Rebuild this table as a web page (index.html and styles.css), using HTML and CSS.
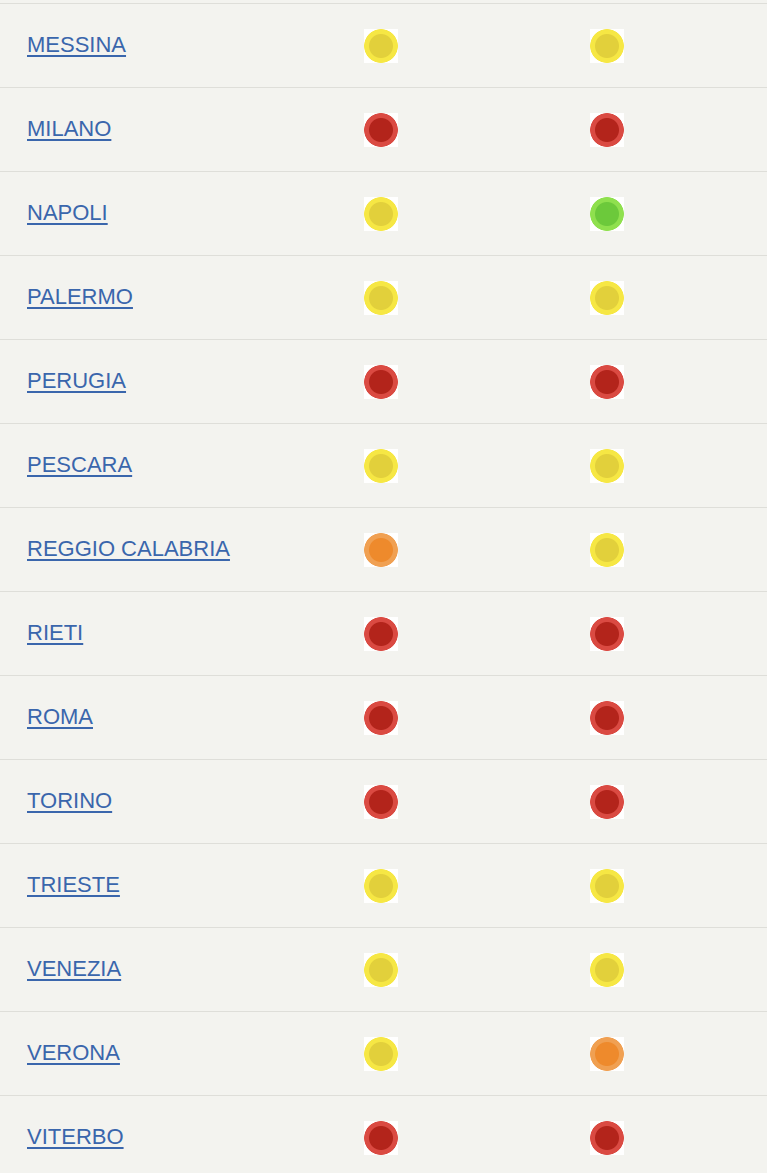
FILE: index.html
```html
<!DOCTYPE html>
<html lang="it">
<head>
<meta charset="utf-8">
<title>Città</title>
<link rel="stylesheet" href="styles.css">
</head>
<body>
<div class="table">
  <div class="row"><a class="city" href="#">MESSINA</a><span class="dot yellow"></span><span class="dot yellow"></span></div>
  <div class="row"><a class="city" href="#">MILANO</a><span class="dot red"></span><span class="dot red"></span></div>
  <div class="row"><a class="city" href="#">NAPOLI</a><span class="dot yellow"></span><span class="dot green"></span></div>
  <div class="row"><a class="city" href="#">PALERMO</a><span class="dot yellow"></span><span class="dot yellow"></span></div>
  <div class="row"><a class="city" href="#">PERUGIA</a><span class="dot red"></span><span class="dot red"></span></div>
  <div class="row"><a class="city" href="#">PESCARA</a><span class="dot yellow"></span><span class="dot yellow"></span></div>
  <div class="row"><a class="city" href="#">REGGIO CALABRIA</a><span class="dot orange"></span><span class="dot yellow"></span></div>
  <div class="row"><a class="city" href="#">RIETI</a><span class="dot red"></span><span class="dot red"></span></div>
  <div class="row"><a class="city" href="#">ROMA</a><span class="dot red"></span><span class="dot red"></span></div>
  <div class="row"><a class="city" href="#">TORINO</a><span class="dot red"></span><span class="dot red"></span></div>
  <div class="row"><a class="city" href="#">TRIESTE</a><span class="dot yellow"></span><span class="dot yellow"></span></div>
  <div class="row"><a class="city" href="#">VENEZIA</a><span class="dot yellow"></span><span class="dot yellow"></span></div>
  <div class="row"><a class="city" href="#">VERONA</a><span class="dot yellow"></span><span class="dot orange"></span></div>
  <div class="row"><a class="city" href="#">VITERBO</a><span class="dot red"></span><span class="dot red"></span></div>
</div>
</body>
</html>
```
FILE: styles.css
```css
html, body {
  margin: 0;
  padding: 0;
  background: #f3f3ef;
}
body {
  font-family: "Liberation Sans", Arial, sans-serif;
  overflow: hidden;
}
.table {
  padding-top: 3px;
}
.row {
  display: grid;
  grid-template-columns: 337px 226px 1fr;
  align-items: center;
  height: 83px;
  padding-left: 27px;
  border-top: 1px solid #deded9;
}
.city {
  font-size: 22px;
  color: #3a66ac;
  text-decoration: underline;
  text-decoration-thickness: 2px;
  text-underline-offset: 3px;
  justify-self: start;
  margin-top: -1px;
}
.dot {
  display: block;
  width: 34px;
  height: 34px;
  margin-top: 1px;
  background: radial-gradient(circle, var(--inner) 11.5px, var(--outer) 12.5px, var(--outer) 16.5px, #ffffff 17.2px);
}
.yellow { --inner: #e2d03b; --outer: #f6e744; }
.red { --inner: #b3241b; --outer: #da4a42; }
.green { --inner: #6cc93b; --outer: #8fe04e; }
.orange { --inner: #ee8a2c; --outer: #f0a052; }
```
